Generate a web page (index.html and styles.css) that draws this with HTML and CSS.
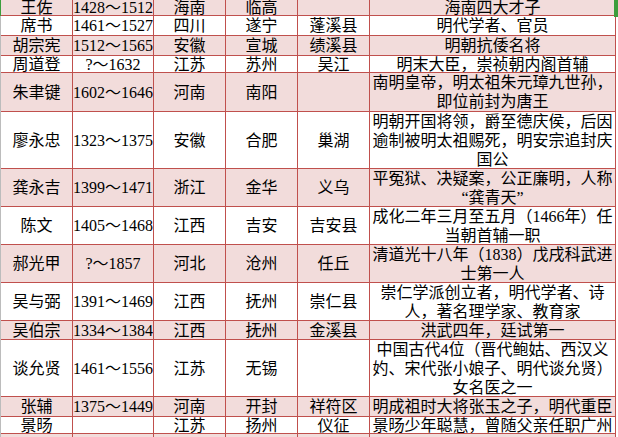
FILE: index.html
```html
<!DOCTYPE html>
<html lang="zh-CN">
<head>
<meta charset="utf-8">
<title>明代人物表</title>
<link rel="stylesheet" href="styles.css">
</head>
<body>
<div class="sheet">
  <div class="row pink">
    <div class="cell">王佐</div><div class="cell">1428～1512</div><div class="cell">海南</div><div class="cell">临高</div><div class="cell"></div><div class="cell desc">海南四大才子</div>
  </div>
  <div class="row">
    <div class="cell">席书</div><div class="cell">1461～1527</div><div class="cell">四川</div><div class="cell">遂宁</div><div class="cell">蓬溪县</div><div class="cell desc">明代学者、官员</div>
  </div>
  <div class="row pink">
    <div class="cell">胡宗宪</div><div class="cell">1512～1565</div><div class="cell">安徽</div><div class="cell">宣城</div><div class="cell">绩溪县</div><div class="cell desc">明朝抗倭名将</div>
  </div>
  <div class="row">
    <div class="cell">周道登</div><div class="cell">?～1632</div><div class="cell">江苏</div><div class="cell">苏州</div><div class="cell">吴江</div><div class="cell desc">明末大臣，崇祯朝内阁首辅</div>
  </div>
  <div class="row pink">
    <div class="cell">朱聿键</div><div class="cell">1602～1646</div><div class="cell">河南</div><div class="cell">南阳</div><div class="cell"></div><div class="cell desc">南明皇帝，明太祖朱元璋九世孙，即位前封为唐王</div>
  </div>
  <div class="row">
    <div class="cell">廖永忠</div><div class="cell">1323～1375</div><div class="cell">安徽</div><div class="cell">合肥</div><div class="cell">巢湖</div><div class="cell desc">明朝开国将领，爵至德庆侯，后因逾制被明太祖赐死，明安宗追封庆国公</div>
  </div>
  <div class="row pink">
    <div class="cell">龚永吉</div><div class="cell">1399～1471</div><div class="cell">浙江</div><div class="cell">金华</div><div class="cell">义乌</div><div class="cell desc">平冤狱、决疑案，公正廉明，人称“龚青天”</div>
  </div>
  <div class="row">
    <div class="cell">陈文</div><div class="cell">1405～1468</div><div class="cell">江西</div><div class="cell">吉安</div><div class="cell">吉安县</div><div class="cell desc">成化二年三月至五月（1466年）任当朝首辅一职</div>
  </div>
  <div class="row pink">
    <div class="cell">郝光甲</div><div class="cell">?～1857</div><div class="cell">河北</div><div class="cell">沧州</div><div class="cell">任丘</div><div class="cell desc">清道光十八年（1838）戊戌科武进士第一人</div>
  </div>
  <div class="row">
    <div class="cell">吴与弼</div><div class="cell">1391～1469</div><div class="cell">江西</div><div class="cell">抚州</div><div class="cell">崇仁县</div><div class="cell desc">崇仁学派创立者，明代学者、诗人，著名理学家、教育家</div>
  </div>
  <div class="row pink">
    <div class="cell">吴伯宗</div><div class="cell">1334～1384</div><div class="cell">江西</div><div class="cell">抚州</div><div class="cell">金溪县</div><div class="cell desc">洪武四年，廷试第一</div>
  </div>
  <div class="row">
    <div class="cell">谈允贤</div><div class="cell">1461～1556</div><div class="cell">江苏</div><div class="cell">无锡</div><div class="cell"></div><div class="cell desc">中国古代4位（晋代鲍姑、西汉义妁、宋代张小娘子、明代谈允贤）女名医之一</div>
  </div>
  <div class="row pink">
    <div class="cell">张辅</div><div class="cell">1375～1449</div><div class="cell">河南</div><div class="cell">开封</div><div class="cell">祥符区</div><div class="cell desc">明成祖时大将张玉之子，明代重臣</div>
  </div>
  <div class="row">
    <div class="cell">景旸</div><div class="cell"></div><div class="cell">江苏</div><div class="cell">扬州</div><div class="cell">仪征</div><div class="cell desc top">景旸少年聪慧，曾随父亲任职广州</div>
  </div>
  <div class="row pink">
    <div class="cell"></div><div class="cell"></div><div class="cell"></div><div class="cell"></div><div class="cell"></div><div class="cell desc"></div>
  </div>
  <span class="sel-left"></span>
  <span class="sel-right"></span>
</div>
</body>
</html>
```

FILE: styles.css
```css
html, body {
  margin: 0;
  padding: 0;
  background: #ffffff;
  overflow: hidden;
}

.sheet {
  position: relative;
  display: grid;
  grid-template-columns: 72px 81px 72px 72px 72px 246px;
  grid-template-rows: 16px 20px 20px 17px 39px 57px 38px 38px 38px 38px 19px 57px 20px 17px 20px;
  width: max-content;
  border-left: 1px solid #bcbcbc;
  font-family: "Liberation Serif", "Noto Sans CJK SC", serif;
  font-size: 16px;
  color: #000000;
}

.row {
  display: contents;
}

.cell {
  box-sizing: border-box;
  border-right: 1px solid #c0504d;
  border-bottom: 1px solid #c0504d;
  display: flex;
  align-items: center;
  justify-content: center;
  text-align: center;
  line-height: 19px;
  white-space: nowrap;
  overflow: hidden;
  background: #ffffff;
}

.pink > .cell {
  background: #f2dcdb;
}

.cell.desc {
  white-space: normal;
}

.sel-left {
  position: absolute;
  left: -1px;
  top: 0;
  width: 1px;
  height: 16px;
  background: #3c9e3c;
}

.sel-right {
  position: absolute;
  left: 613px;
  top: 0;
  width: 4px;
  height: 17px;
  background: #3c9e3c;
}
```
